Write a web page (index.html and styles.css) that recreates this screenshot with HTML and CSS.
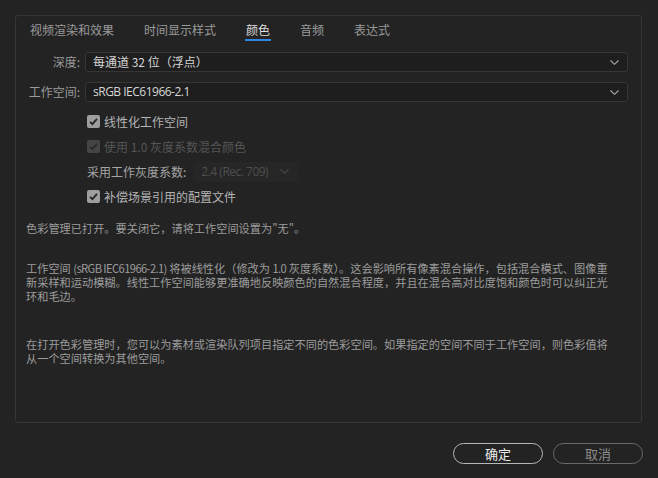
FILE: index.html
```html
<!DOCTYPE html>
<html lang="zh-CN">
<head>
<meta charset="utf-8">
<title>颜色</title>
<link rel="stylesheet" href="styles.css">
</head>
<body>
<div class="panel">
  <div class="tabs">
    <span class="tab">视频渲染和效果</span>
    <span class="tab">时间显示样式</span>
    <span class="tab active">颜色</span>
    <span class="tab">音频</span>
    <span class="tab">表达式</span>
  </div>

  <div class="form">
    <div class="field">
      <label class="label">深度:</label>
      <div class="select">
        <span class="value">每通道 32 位（浮点）</span>
        <svg class="chev" width="9" height="5" viewBox="0 0 9 5"><path d="M0.5 0.5 L4.5 4.3 L8.5 0.5" fill="none" stroke="#a8a8a8" stroke-width="1.1"/></svg>
      </div>
    </div>
    <div class="field">
      <label class="label">工作空间:</label>
      <div class="select">
        <span class="value latin">sRGB IEC61966-2.1</span>
        <svg class="chev" width="9" height="5" viewBox="0 0 9 5"><path d="M0.5 0.5 L4.5 4.3 L8.5 0.5" fill="none" stroke="#a8a8a8" stroke-width="1.1"/></svg>
      </div>
    </div>
  </div>

  <div class="options">
    <div class="opt">
      <span class="box"><svg width="13" height="13" viewBox="0 0 13 13"><path d="M3 6.8 L5.4 9.2 L10 3.8" fill="none" stroke="#262626" stroke-width="1.8"/></svg></span>
      <span class="opt-label">线性化工作空间</span>
    </div>
    <div class="opt disabled">
      <span class="box"><svg width="13" height="13" viewBox="0 0 13 13"><path d="M3 6.8 L5.4 9.2 L10 3.8" fill="none" stroke="#2a2a2a" stroke-width="1.8"/></svg></span>
      <span class="opt-label">使用 1.0 灰度系数混合颜色</span>
    </div>
    <div class="opt">
      <span class="opt-label plain">采用工作灰度系数:</span>
      <div class="select small">
        <span class="value latin">2.4 (Rec. 709)</span>
        <svg class="chev" width="9" height="5" viewBox="0 0 9 5"><path d="M0.5 0.5 L4.5 4.3 L8.5 0.5" fill="none" stroke="#4a4a4a" stroke-width="1.1"/></svg>
      </div>
    </div>
    <div class="opt">
      <span class="box"><svg width="13" height="13" viewBox="0 0 13 13"><path d="M3 6.8 L5.4 9.2 L10 3.8" fill="none" stroke="#262626" stroke-width="1.8"/></svg></span>
      <span class="opt-label">补偿场景引用的配置文件</span>
    </div>
  </div>

  <div class="notes">
    <p class="note first">色彩管理已打开。要关闭它，请将工作空间设置为"无"。</p>
    <p class="note second">工作空间 <span class="lat">(sRGB IEC61966-2.1)</span> 将被线性化（修改为 <span class="lat">1.0</span> 灰度系数）。这会影响所有像素混合操作，包括混合模式、图像重<br>新采样和运动模糊。线性工作空间能够更准确地反映颜色的自然混合程度，并且在混合高对比度饱和颜色时可以纠正光<br>环和毛边。</p>
    <p class="note third">在打开色彩管理时，您可以为素材或渲染队列项目指定不同的色彩空间。如果指定的空间不同于工作空间，则色彩值将<br>从一个空间转换为其他空间。</p>
  </div>
</div>

<div class="buttons">
  <button class="btn primary">确定</button>
  <button class="btn">取消</button>
</div>
</body>
</html>
```

FILE: styles.css
```css
* { box-sizing: border-box; }

html, body {
  margin: 0;
  padding: 0;
  background: #232323;
  width: 658px;
  height: 478px;
  overflow: hidden;
}

body {
  font-family: "Noto Sans CJK SC", "Noto Sans", sans-serif;
  color: #a0a0a0;
}

.panel {
  margin: 15px 16px 0 15px;
  height: 408px;
  border: 1px solid #363636;
  border-radius: 3px;
}

.tabs {
  display: flex;
  gap: 30px;
  padding: 6px 0 0 14px;
  height: 26px;
}

.tab {
  position: relative;
  font-size: 12px;
  line-height: 16px;
  color: #9a9a9a;
}

.tab.active {
  color: #dedede;
}

.tab.active::after {
  content: "";
  position: absolute;
  left: -1px;
  right: -1px;
  top: 17px;
  height: 2px;
  background: #2f86e0;
}

.form {
  padding: 10px 13px 0 10px;
  display: flex;
  flex-direction: column;
  gap: 10px;
}

.field {
  display: flex;
  align-items: center;
  gap: 5px;
}

.label {
  width: 54px;
  text-align: right;
  font-size: 12px;
  line-height: 16px;
  color: #9a9a9a;
}

.select {
  flex: 1;
  height: 20px;
  display: flex;
  align-items: center;
  justify-content: space-between;
  padding: 0 8px 0 7px;
  background: #1e1e1e;
  border: 1px solid #363636;
  border-radius: 3px;
}

.value {
  font-size: 12px;
  line-height: 16px;
  color: #d6d6d6;
}

.latin {
  font-family: "Open Sans", "Noto Sans", sans-serif;
  font-size: 12px;
  letter-spacing: -0.5px;
}

.chev { display: block; }

.options {
  padding: 7px 0 0 71px;
  display: flex;
  flex-direction: column;
}

.opt {
  height: 25px;
  display: flex;
  align-items: center;
  gap: 4px;
}

.box {
  width: 13px;
  height: 13px;
  border-radius: 2px;
  background: #9e9e9e;
  display: block;
}

.box svg { display: block; }

.opt.disabled .box { background: #454545; }

.opt-label {
  font-size: 12px;
  line-height: 16px;
  color: #b4b4b4;
}

.opt.disabled .opt-label { color: #555555; }

.opt-label.plain {
  color: #a6a6a6;
  margin-right: 3px;
}

.select.small {
  flex: 0 0 105px;
  background: #262626;
  border-color: #262626;
}

.select.small .value { color: #4e4e4e; }

.notes {
  padding: 12px 0 0 10px;
  width: 626px;
}

.note {
  margin: 0;
  font-size: 11.2px;
  line-height: 14px;
  color: #9c9c9c;
}

.lat {
  letter-spacing: -0.6px;
}

.note.second { margin-top: 26px; }
.note.third { margin-top: 34px; }

.buttons {
  display: flex;
  justify-content: flex-end;
  gap: 10px;
  padding: 20px 15px 0 0;
}

.btn {
  width: 90px;
  height: 21px;
  border-radius: 11px;
  background: transparent;
  border: 1.5px solid #6a6a6a;
  color: #8c8c8c;
  font-family: "Noto Sans CJK SC", "Noto Sans", sans-serif;
  font-size: 13px;
  line-height: 16px;
  padding: 0;
}

.btn.primary {
  border-color: #b8b8b8;
  color: #ececec;
}
```
